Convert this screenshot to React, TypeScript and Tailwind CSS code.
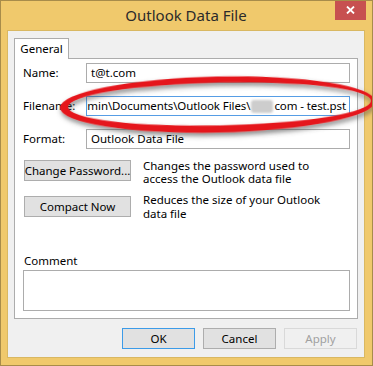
import React from "react";

const font = { fontFamily: '"Noto Sans", "Open Sans", Arial, sans-serif' };

function TextBox({
  children,
  focused,
  alignEnd,
}: {
  children: React.ReactNode;
  focused?: boolean;
  alignEnd?: boolean;
}) {
  return (
    <div
      className={`flex-1 h-[20px] bg-white border flex items-center overflow-hidden whitespace-nowrap text-[11.5px] text-black ${
        focused ? "border-[#569de5]" : "border-[#acacac]"
      } ${alignEnd ? "justify-end pr-[3px] tracking-[-0.1px]" : "pl-[4px]"}`}
    >
      {children}
    </div>
  );
}

function Row({ label, children }: { label: string; children: React.ReactNode }) {
  return (
    <div className="flex items-center h-[20px]">
      <span className="w-[63px] text-[11.5px] text-black">{label}</span>
      {children}
    </div>
  );
}

function Btn({
  children,
  className = "",
}: {
  children: React.ReactNode;
  className?: string;
}) {
  return (
    <button
      className={`shrink-0 h-[21px] flex items-center justify-center whitespace-nowrap text-[11.5px] border ${className}`}
    >
      {children}
    </button>
  );
}

export default function App() {
  return (
    <div
      className="relative w-[373px] h-[366px] bg-[#f0c96c] border border-[#a88c4a] flex flex-col overflow-hidden"
      style={font}
    >
      {/* Title bar */}
      <div className="h-[29px] flex items-start pr-[6px] shrink-0">
        <div className="w-[36px]" />
        <div className="flex-1 text-center text-[15px] text-[#2b2b2b] pt-[3px]">
          Outlook Data File
        </div>
        <button className="w-[31px] h-[20px] -mt-[1px] bg-[#c75050] flex items-center justify-center">
          <svg width="9" height="8" viewBox="0 0 9 8">
            <path d="M1 0.5 L8 7.5 M8 0.5 L1 7.5" stroke="white" strokeWidth="1.8" />
          </svg>
        </button>
      </div>

      {/* Client area */}
      <div className="ml-[6px] mr-[7px] h-[328px] border border-[#d9b862] bg-[#f0f0f0] flex flex-col px-[6px] pt-[7px]">
        {/* Tab */}
        <div className="flex">
          <div className="relative z-10 -mb-[1px] h-[21px] w-[55px] bg-white border border-b-0 border-[#acacac] flex items-center justify-center text-[11.5px] text-black">
            General
          </div>
        </div>

        {/* Panel */}
        <div className="h-[261px] bg-white border border-[#acacac] flex flex-col pl-[8px] pr-[7px] pt-[4px] pb-[7px]">
          <div className="flex flex-col gap-[13px]">
            <Row label="Name:">
              <TextBox>t@t.com</TextBox>
            </Row>
            <Row label="Filename:">
              <TextBox focused alignEnd>
                <span className="shrink-0">C:\Users\Admin\Documents\Outlook Files\</span>
                <span className="shrink-0 inline-block w-[22px] h-[13px] mx-[1px] rounded-[3px] bg-[#cdcdcd] blur-[1px]" />
                <span className="shrink-0">com - test.pst</span>
              </TextBox>
            </Row>
            <Row label="Format:">
              <TextBox>Outlook Data File</TextBox>
            </Row>
          </div>

          <div className="mt-[11px] flex items-start gap-[12px] pl-[1px]">
            <Btn className="w-[107px] bg-[#e1e1e1] border-[#adadad] text-black">
              Change Password...
            </Btn>
            <p className="text-[11.5px] leading-[13px] text-black -mt-[1px]">
              Changes the password used to
              <br />
              access the Outlook data file
            </p>
          </div>

          <div className="mt-[11px] flex items-start gap-[12px] pl-[1px]">
            <Btn className="w-[107px] bg-[#e1e1e1] border-[#adadad] text-black">
              Compact Now
            </Btn>
            <p className="text-[11.5px] leading-[14px] text-black -mt-[3px]">
              Reduces the size of your Outlook
              <br />
              data file
            </p>
          </div>

          <div className="mt-auto flex flex-col">
            <span className="text-[11.5px] text-black pl-[1px] leading-[16px]">Comment</span>
            <div className="mt-[1px] h-[41px] border border-[#acacac] bg-white" />
          </div>
        </div>

        {/* Dialog buttons */}
        <div className="mt-[9px] flex justify-end gap-[8px] pr-[1px]">
          <Btn className="w-[73px] bg-[#e1e1e1] border-[#3c9be8] text-black">OK</Btn>
          <Btn className="w-[73px] bg-[#e1e1e1] border-[#adadad] text-black">Cancel</Btn>
          <Btn className="w-[73px] bg-[#f0f0f0] border-[#d9d9d9] text-[#a0a0a0]">Apply</Btn>
        </div>
      </div>

      {/* Red annotation ellipse */}
      <svg
        className="absolute -left-[1px] -top-[1px] pointer-events-none"
        width="373"
        height="366"
        viewBox="0 0 373 366"
      >
        <defs>
          <filter id="shadow" x="-10%" y="-50%" width="120%" height="200%">
            <feGaussianBlur in="SourceAlpha" stdDeviation="2.5" />
            <feOffset dx="1" dy="2.5" result="b" />
            <feFlood floodColor="#444" floodOpacity="0.65" />
            <feComposite in2="b" operator="in" />
            <feMerge>
              <feMergeNode />
              <feMergeNode in="SourceGraphic" />
            </feMerge>
          </filter>
        </defs>
        <g filter="url(#shadow)" transform="rotate(-1.2 218 104)">
          <path
            fillRule="evenodd"
            fill="#e5161c"
            d="M60 104.5 A157.5 28 0 1 0 375 104.5 A157.5 28 0 1 0 60 104.5 Z M68 104 A151.5 21.5 0 1 0 371 104 A151.5 21.5 0 1 0 68 104 Z"
          />
        </g>
      </svg>
    </div>
  );
}
